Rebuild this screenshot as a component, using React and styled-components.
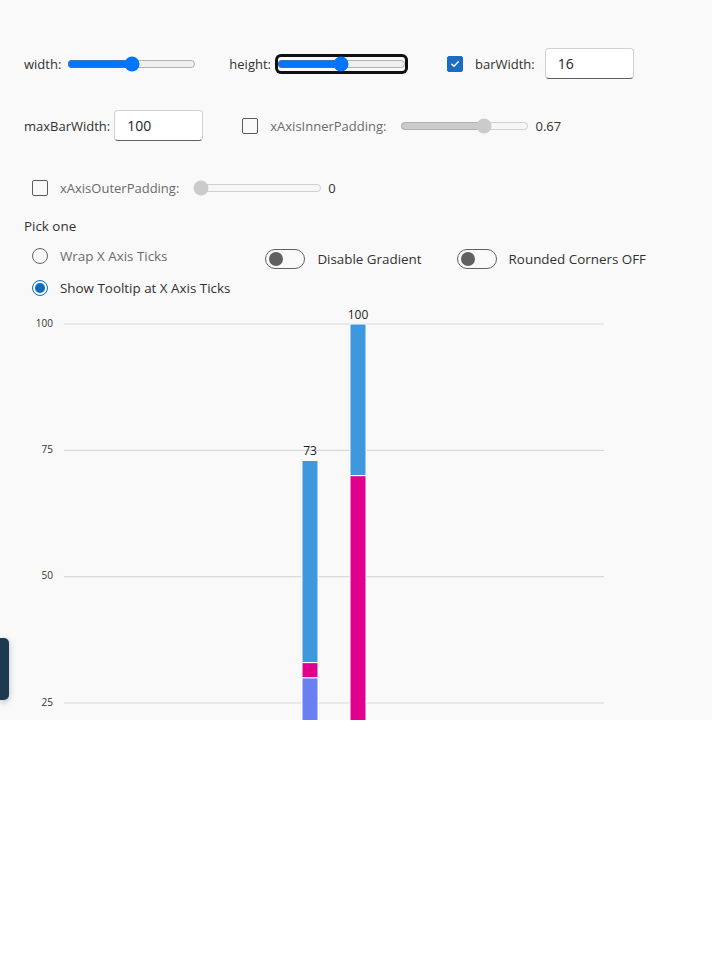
import React from 'react';
import styled, { createGlobalStyle, css } from 'styled-components';

const GlobalStyle = createGlobalStyle`
  body {
    margin: 0;
    background: #ffffff;
    font-family: 'Open Sans', 'Noto Sans', sans-serif;
    font-size: 13.4px;
    color: #323130;
  }
`;

const Page = styled.div`
  position: relative;
  height: 720px;
  overflow: hidden;
  background: #f9f9f9;
  padding: 48px 24px 0;
  box-sizing: border-box;
`;

const Rows = styled.div`
  display: flex;
  flex-direction: column;
  gap: 31px;
  font-size: 13px;
`;

const Row = styled.div`
  display: flex;
  align-items: center;
  height: 31px;
  gap: 31px;
  padding-left: ${(p) => p.$indent || 0}px;
`;

const Field = styled.label`
  display: flex;
  align-items: center;
  gap: ${(p) => p.$gap ?? 4}px;
  margin-left: ${(p) => p.$offset || 0}px;
`;

const Label = styled.span`
  color: ${(p) => (p.$muted ? '#6b6b6b' : '#323130')};
  white-space: nowrap;
`;

const Range = styled.input.attrs({ type: 'range' })`
  width: 129px;
  height: 16px;
  margin: 2px;
  ${(p) =>
    p.$focused &&
    css`
      border-radius: 4px;
      box-shadow: 0 0 0 2px #101010;
    `}
`;

const TextBox = styled.input`
  width: 89px;
  height: 31px;
  box-sizing: border-box;
  padding: 0 12px;
  border: 1px solid #d1d1d1;
  border-bottom-color: #616161;
  border-radius: 4px;
  background: #fff;
  font: inherit;
  font-size: 14px;
  color: #242424;
  margin-left: ${(p) => p.$offset || 0}px;
`;

const Box = styled.span`
  display: inline-flex;
  align-items: center;
  justify-content: center;
  width: 16px;
  height: 16px;
  box-sizing: border-box;
  border-radius: 2px;
  border: 1px solid ${(p) => (p.$checked ? '#1a6dc0' : '#5c5c5c')};
  background: ${(p) => (p.$checked ? '#1a6dc0' : 'transparent')};
  margin-right: 8px;
`;

const Value = styled.span`
  color: #323130;
  margin-left: 4px;
`;

const Heading = styled.div`
  margin-top: 13px;
  line-height: 20px;
  color: #323130;
`;

const Options = styled.div`
  display: flex;
  align-items: flex-start;
  gap: 35px;
  margin-top: 10px;
`;

const RadioGroup = styled.div`
  display: flex;
  flex-direction: column;
  gap: 12px;
  padding-left: 8px;
`;

const RadioItem = styled.label`
  display: flex;
  align-items: center;
  gap: 12px;
  height: 20px;
`;

const Dot = styled.span`
  width: 16px;
  height: 16px;
  box-sizing: border-box;
  border-radius: 50%;
  border: 1px solid ${(p) => (p.$checked ? '#0f6cbd' : '#616161')};
  display: flex;
  align-items: center;
  justify-content: center;
  &::after {
    content: '';
    width: 10px;
    height: 10px;
    border-radius: 50%;
    background: ${(p) => (p.$checked ? '#0f6cbd' : 'transparent')};
  }
`;

const SwitchItem = styled.label`
  display: flex;
  align-items: center;
  gap: 12px;
  height: 20px;
  margin-top: 3px;
`;

const Track = styled.span`
  width: 40px;
  height: 20px;
  box-sizing: border-box;
  border: 1px solid #616161;
  border-radius: 10px;
  display: flex;
  align-items: center;
  padding-left: 3px;
  &::after {
    content: '';
    width: 14px;
    height: 14px;
    border-radius: 50%;
    background: #616161;
  }
`;

const ChartWrap = styled.div`
  margin-top: 0;
`;

const SideTab = styled.div`
  position: absolute;
  left: 0;
  top: 638px;
  width: 9px;
  height: 62px;
  background: #1e3a51;
  border-radius: 0 5px 5px 0;
  box-shadow: 0 2px 6px rgba(0, 0, 0, 0.25);
`;

const Check = () => (
  <svg width="10" height="10" viewBox="0 0 10 10">
    <path d="M1.8 5.2 L4 7.3 L8.3 2.8" fill="none" stroke="#fff" strokeWidth="1.4" strokeLinecap="round" strokeLinejoin="round" />
  </svg>
);

const COLORS = { blue: '#3d98de', pink: '#e0008b', violet: '#6a80f0' };

const bars = [
  { x: 278, segments: [{ v: 30, c: 'violet' }, { v: 3, c: 'pink' }, { v: 40, c: 'blue' }] },
  { x: 326, segments: [{ v: 70, c: 'pink' }, { v: 30, c: 'blue' }] },
];

const top = 26;
const unit = 5.0533;
const yOf = (v) => top + (100 - v) * unit;

const Chart = () => (
  <svg width="600" height="430" style={{ display: 'block' }}>
    {[100, 75, 50, 25].map((t) => (
      <g key={t}>
        <text x="29" y={yOf(t)} textAnchor="end" dominantBaseline="middle" fontSize="10" fill="#333">
          {t}
        </text>
        <line x1="40" x2="580" y1={yOf(t)} y2={yOf(t)} stroke="#d9d9d9" strokeWidth="1.2" />
      </g>
    ))}
    {bars.map((b, i) => {
      let acc = 0;
      const total = b.segments.reduce((s, x) => s + x.v, 0);
      return (
        <g key={i}>
          {b.segments.map((s, j) => {
            const y1 = yOf(acc + s.v);
            const y0 = yOf(acc);
            acc += s.v;
            return (
              <rect key={j} x={b.x} y={y1} width="16" height={y0 - y1} fill={COLORS[s.c]} stroke="#fff" strokeWidth="1" />
            );
          })}
          <text x={b.x + 8} y={yOf(total) - 5} textAnchor="middle" fontSize="12" fill="#222">
            {total}
          </text>
        </g>
      );
    })}
  </svg>
);

export default function App() {
  return (
    <>
      <GlobalStyle />
      <Page>
        <Rows>
          <Row>
            <Field>
              <Label>width:</Label>
              <Range min="0" max="100" defaultValue="50" />
            </Field>
            <Field>
              <Label>height:</Label>
              <Range min="0" max="100" defaultValue="50" $focused />
            </Field>
            <Field $gap={0} $offset={8}>
              <Box $checked>
                <Check />
              </Box>
              <Label style={{ marginLeft: 4 }}>barWidth:</Label>
              <TextBox defaultValue="16" $offset={10} />
            </Field>
          </Row>
          <Row>
            <Field>
              <Label>maxBarWidth:</Label>
              <TextBox defaultValue="100" />
            </Field>
            <Field $gap={0} $offset={8}>
              <Box />
              <Label $muted style={{ marginLeft: 4, marginRight: 12 }}>xAxisInnerPadding:</Label>
              <Range min="0" max="1" step="0.01" defaultValue="0.67" disabled />
              <Value>0.67</Value>
            </Field>
          </Row>
          <Row $indent={8}>
            <Field $gap={0}>
              <Box />
              <Label $muted style={{ marginLeft: 4, marginRight: 12 }}>xAxisOuterPadding:</Label>
              <Range min="0" max="1" step="0.01" defaultValue="0" disabled />
              <Value>0</Value>
            </Field>
          </Row>
        </Rows>
        <Heading>Pick one</Heading>
        <Options>
          <RadioGroup>
            <RadioItem>
              <Dot />
              <Label $muted>Wrap X Axis Ticks</Label>
            </RadioItem>
            <RadioItem>
              <Dot $checked />
              <Label>Show Tooltip at X Axis Ticks</Label>
            </RadioItem>
          </RadioGroup>
          <SwitchItem>
            <Track />
            <Label>Disable Gradient</Label>
          </SwitchItem>
          <SwitchItem>
            <Track />
            <Label>Rounded Corners OFF</Label>
          </SwitchItem>
        </Options>
        <ChartWrap>
          <Chart />
        </ChartWrap>
        <SideTab />
      </Page>
    </>
  );
}
